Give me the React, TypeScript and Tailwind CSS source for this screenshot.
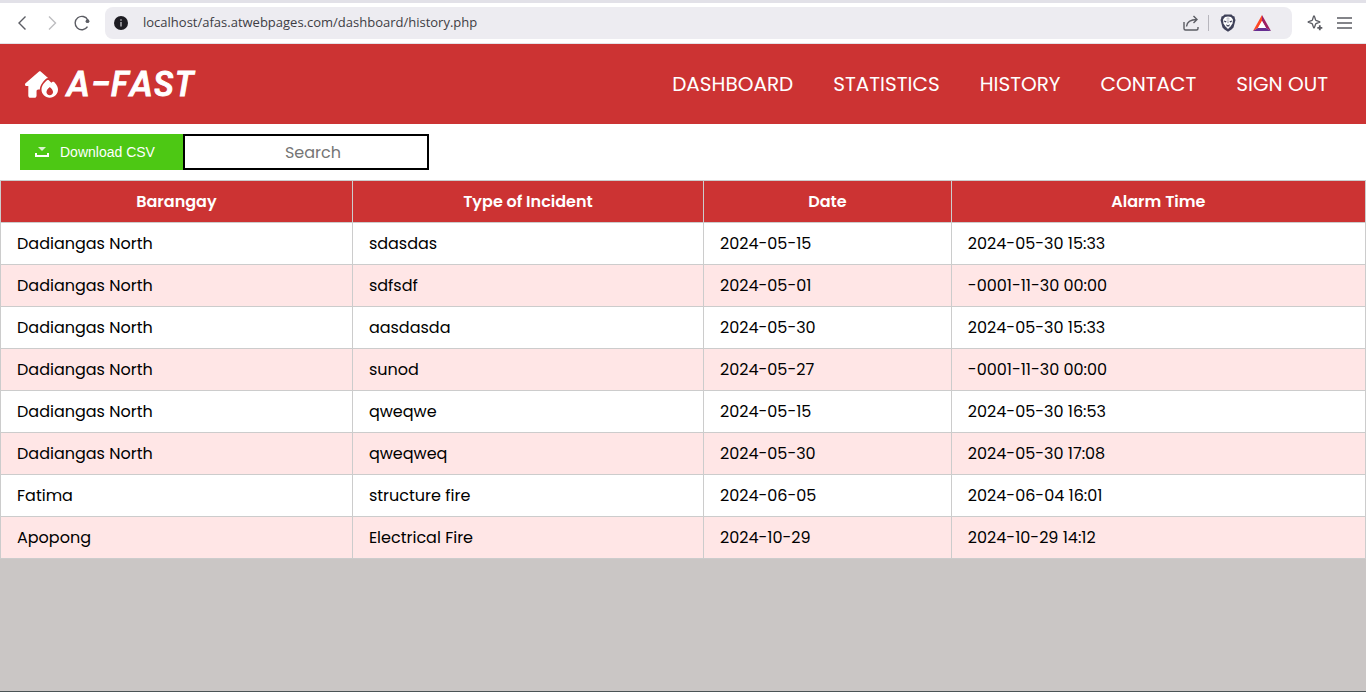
import React from 'react';
import { FaHouseFire } from 'react-icons/fa6';

const links = ['DASHBOARD', 'STATISTICS', 'HISTORY', 'CONTACT', 'SIGN OUT'];

const incidents = [
  ['Dadiangas North', 'sdasdas', '2024-05-15', '2024-05-30 15:33'],
  ['Dadiangas North', 'sdfsdf', '2024-05-01', '-0001-11-30 00:00'],
  ['Dadiangas North', 'aasdasda', '2024-05-30', '2024-05-30 15:33'],
  ['Dadiangas North', 'sunod', '2024-05-27', '-0001-11-30 00:00'],
  ['Dadiangas North', 'qweqwe', '2024-05-15', '2024-05-30 16:53'],
  ['Dadiangas North', 'qweqweq', '2024-05-30', '2024-05-30 17:08'],
  ['Fatima', 'structure fire', '2024-06-05', '2024-06-04 16:01'],
  ['Apopong', 'Electrical Fire', '2024-10-29', '2024-10-29 14:12'],
];

function BrowserBar() {
  return (
    <div className="flex h-11 items-center border-t-[3px] border-b border-t-[#e2e1e8] border-b-[#e4e3e8] bg-white pr-3.5 pl-3">
      <div className="flex items-center gap-2.5">
        <button type="button" aria-label="Back" className="text-[#5b5c63]">
          <svg width="20" height="20" viewBox="0 0 20 20" fill="none" stroke="currentColor" strokeWidth="1.4"><path d="M13.500 3.500 7 10l6.500 6.500" /></svg>
        </button>
        <button type="button" aria-label="Forward" className="text-[#bdbdc0]">
          <svg width="20" height="20" viewBox="0 0 20 20" fill="none" stroke="currentColor" strokeWidth="1.4"><path d="m7 3.500 6.500 6.500L7 16.500" /></svg>
        </button>
        <button type="button" aria-label="Reload" className="text-[#5b5c63]">
          <svg width="20" height="20" viewBox="0 0 20 20" fill="none" stroke="currentColor" strokeWidth="1.4"><path d="M15.500 13.700A6.700 6.700 0 1 1 15.800 7" /><circle cx="15.500" cy="8.200" r="1.900" fill="currentColor" stroke="none" /></svg>
        </button>
      </div>
      <div className="ml-[13px] flex h-8 flex-1 items-center rounded-lg bg-[#edecf1] pr-[21px] pl-2">
        <svg width="16" height="16" viewBox="0 0 16 16"><circle cx="8" cy="8" r="7" fill="#1e1d23" /><path d="M7.200 4.300h1.600v1.500H7.200zM7.200 7h1.600v4.500H7.200z" fill="#a5a5aa" /></svg>
        <input
          aria-label="Address"
          className="ml-3.5 min-w-0 flex-1 bg-transparent font-['Open_Sans','Noto_Sans',sans-serif] text-[13px] text-[#3d3d44] outline-none"
          defaultValue="localhost/afas.atwebpages.com/dashboard/history.php"
        />
        <button type="button" aria-label="Share" className="text-[#5b5c63]">
          <svg width="18" height="18" viewBox="0 0 18 18" fill="none" stroke="currentColor" strokeWidth="1.4"><path d="M2 8v6.500A1.500 1.500 0 0 0 3.500 16h11a1.500 1.500 0 0 0 1.500-1.500V13M4.500 12.500C5 8 8 5.500 15 5.500M11.500 2 15 5.500 11.500 9" /></svg>
        </button>
        <span className="ml-2 h-4 w-px bg-[#b7b6bd]" />
        <button type="button" aria-label="Shields" className="ml-2.5">
          <svg width="18" height="18" viewBox="0 0 18 18">
            <path d="M5.500.500h7l1.500 1.500 1.500.500L16 5l.500 1-2 7.500-2 2L9 17.800l-3.500-2.300-2-2L1.500 6 2 5l.500-2.500L4 2z" fill="#3f4159" />
            <path d="M6 3 9 2.500 12 3l2 2.500-.500 4-2 3L9 15l-2.500-2.500-2-3L4 5.500z" fill="#fff" />
            <path d="m5 6.500 2.500.800-.500 1.200L5.300 8zM13 6.500l-2.500.800.500 1.200L12.700 8zM7 10.300l2 1 2-1-.700 1.700L9 12.600 7.700 12z" fill="#3f4159" />
            <path d="M8 4h2l-.500 5h-1zM7 13.300l2-1 2 1" fill="none" stroke="#8b8d9c" strokeWidth=".5" />
          </svg>
        </button>
        <button type="button" aria-label="Rewards" className="ml-4">
          <svg width="18" height="16" viewBox="0 0 18 16">
            <path d="M9 0 0 16l5-3 4-7z" fill="#ff4724" />
            <path d="M9 0v6l4 7 5 3z" fill="#9e1f63" />
            <path d="M0 16h18l-5-3H5z" fill="#662d91" />
            <path d="m9 6 4 7H5z" fill="#fff" />
          </svg>
        </button>
      </div>
      <div className="ml-3.5 flex items-center gap-3 text-[#5b5c63]">
        <button type="button" aria-label="Assistant">
          <svg width="18" height="18" viewBox="0 0 18 18" fill="none" stroke="currentColor" strokeWidth="1.3" strokeLinejoin="round"><path d="M8 2c.8 0 1 3.300 1.800 4.200C10.700 7 14 7.200 14 8s-3.300 1-4.200 1.800C9 10.700 8.800 14 8 14s-1-3.300-1.800-4.200C5.300 9 2 8.800 2 8s3.300-1 4.200-1.800C7 5.300 7.200 2 8 2Z" /><path d="M13.800 11.300v5M11.300 13.800h5" strokeWidth="1.8" /></svg>
        </button>
        <button type="button" aria-label="Menu">
          <svg width="16" height="16" viewBox="0 0 16 16" fill="none" stroke="currentColor" strokeWidth="1.3"><path d="M1 3h15M1 8h15M1 13h15" /></svg>
        </button>
      </div>
    </div>
  );
}

export default function App() {
  return (
    <div className="flex min-h-screen flex-col border-b border-[#4b5355] bg-[#cac6c5] font-['Poppins','Inter',sans-serif] text-black">
      <BrowserBar />
      <header className="flex h-20 items-center justify-between bg-[#cc3333] pr-[38px] pl-[25px] text-white">
        <a href="#home" className="flex items-center gap-2">
          <FaHouseFire className="h-[27px] w-[33px]" />
          <span className="text-[35px] font-medium italic [-webkit-text-stroke:1px_white]">A-FAST</span>
        </a>
        <nav className="flex gap-10 text-xl">
          {links.map((link) => (
            <a key={link} href="#page">{link}</a>
          ))}
        </nav>
      </header>
      <main>
        <div className="flex bg-white px-5 py-2.5">
          <button type="button" className="flex h-9 w-[163px] items-center gap-2.5 bg-[#4dc814] pl-3.5 font-['Liberation_Sans',sans-serif] text-sm text-white">
            <svg width="16" height="16" viewBox="0 0 16 16" fill="currentColor"><path d="M4 3h8L8 7z" opacity="0.8" /><path d="M1 9h2v2h10V9h2v4H1z" /></svg>
            Download CSV
          </button>
          <input type="text" aria-label="Search" placeholder="Search" className="h-9 w-[246px] border-2 border-black bg-white pl-3.5 text-center placeholder:text-[#757575]" />
        </div>
        <table className="w-full table-fixed border-collapse bg-white">
          <colgroup>
            <col className="w-[25.78%]" />
            <col className="w-[25.72%]" />
            <col className="w-[18.16%]" />
            <col className="w-[30.34%]" />
          </colgroup>
          <thead>
            <tr className="h-[42px] bg-[#cc3333] text-white">
              {['Barangay', 'Type of Incident', 'Date', 'Alarm Time'].map((title) => (
                <th key={title} className="border border-[#cccccc] px-4 font-semibold">{title}</th>
              ))}
            </tr>
          </thead>
          <tbody>
            {incidents.map((row, index) => (
              <tr key={index} className="h-[42px] even:bg-[#ffe6e6]">
                {row.map((cell, column) => (
                  <td key={column} className="border border-[#cccccc] px-4">{cell}</td>
                ))}
              </tr>
            ))}
          </tbody>
        </table>
      </main>
    </div>
  );
}
